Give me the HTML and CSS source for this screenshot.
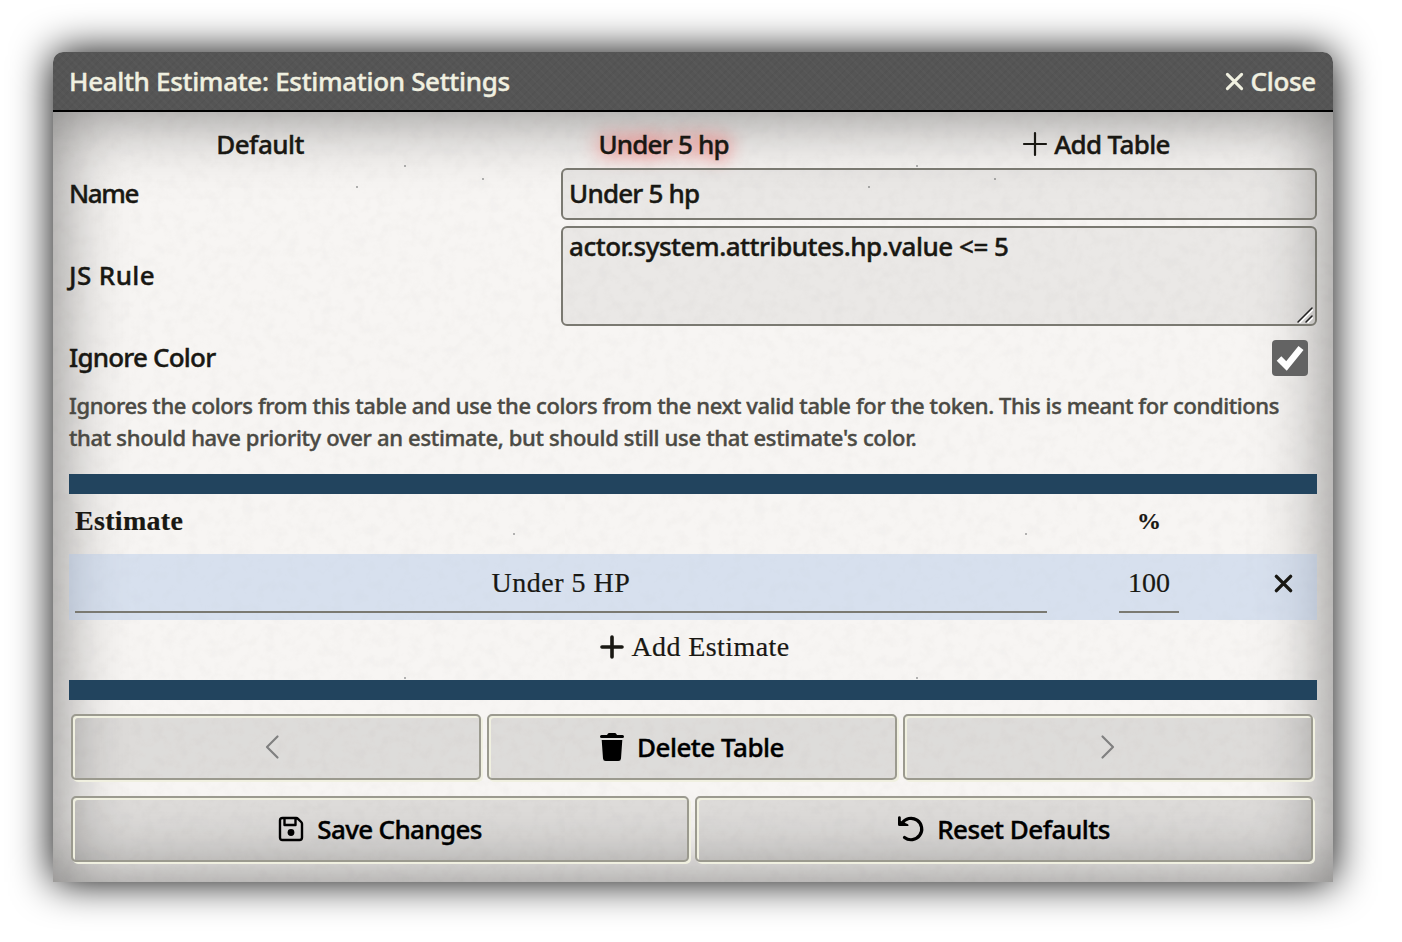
FILE: index.html
```html
<!DOCTYPE html>
<html lang="en">
<head>
<meta charset="utf-8">
<title>Health Estimate: Estimation Settings</title>
<link rel="stylesheet" href="styles.css">
</head>
<body>
<div class="window">
  <header class="window-header">
    <h1 class="title">Health Estimate: Estimation Settings</h1>
    <a class="close"><svg class="icon-x" viewBox="0 0 20 20"><path d="M2.5 2.5l15 15m0-15l-15 15"/></svg><span class="close-text">Close</span></a>
  </header>
  <form class="content">
    <nav class="tabs">
      <a class="tab tab-default">Default</a>
      <a class="tab tab-under active">Under 5 hp</a>
      <a class="tab tab-add"><svg class="icon-plus" viewBox="0 0 24 24"><path d="M12 1v22M1 12h22"/></svg><span class="add-text">Add Table</span></a>
    </nav>
    <div class="group group-name"><label class="l-name">Name</label><div class="field"><span class="t-name">Under 5 hp</span></div></div>
    <div class="group group-rule"><label class="l-rule">JS Rule</label><div class="field area"><span class="t-rule">actor.system.attributes.hp.value &lt;= 5</span><svg class="grip" viewBox="0 0 16 16"><path class="grip-light" d="M3 15.5L15.500 3M11 15.500l4.500-4.500"/><path d="M1 15L15 1M9 15l6-6"/></svg></div></div>
    <div class="group group-color"><label class="l-ignore">Ignore Color</label><span class="check"><svg viewBox="0 0 36 36"><path d="M7 18.500l7.500 7.500L29 8"/></svg></span></div>
    <p class="notes"><span class="n1">Ignores the colors from this table and use the colors from the next valid table for the token. This is meant for conditions</span><br><span class="n2">that should have priority over an estimate, but should still use that estimate's color.</span></p>
    <section class="table">
      <div class="row head"><span class="h-est">Estimate</span><span class="h-pct">%</span></div>
      <div class="row entry">
        <span class="cell-est"><span class="v-est">Under 5 HP</span></span>
        <span class="cell-pct"><span class="v-pct">100</span></span>
        <a class="remove"><svg class="icon-x bold" viewBox="0 0 20 20"><path d="M2.500 2.500l15 15m0-15l-15 15"/></svg></a>
      </div>
      <div class="row add"><svg class="icon-plus bold" viewBox="0 0 24 24"><path d="M12 2v20M2 12h20"/></svg><span class="add-est">Add Estimate</span></div>
    </section>
    <div class="buttons three">
      <button type="button" class="btn muted prev"><svg class="chev" viewBox="0 0 14 24"><path d="M12.500 1.500L2 12l10.500 10.500"/></svg></button>
      <button type="button" class="btn"><svg class="trash" viewBox="0 0 24 28"><path d="M0 3.500Q0 2 1.500 2H7l1-1.500Q8.300 0 9 0h6q.7 0 1 .5L17 2h5.500Q24 2 24 3.500T22.500 5h-21Q0 5 0 3.500zM1.700 7h20.600l-1.300 18.500Q20.800 28 18.300 28H5.700Q3.200 28 3 25.500z"/></svg><span class="b-del">Delete Table</span></button>
      <button type="button" class="btn muted"><svg class="chev" viewBox="0 0 14 24"><path d="M1.500 1.500L12 12 1.500 22.500"/></svg></button>
    </div>
    <div class="buttons two">
      <button type="button" class="btn save"><svg class="disk" viewBox="0 0 26 26"><path d="M4.500 2h13.700q1 0 1.800.8l3.200 3.200q.8.800.8 1.800v13.700q0 2.500-2.500 2.500h-17Q2 24 2 21.500v-17Q2 2 4.500 2zM6.500 2v7h11V2"/><circle cx="13" cy="16.500" r="3.400"/></svg><span class="b-save">Save Changes</span></button>
      <button type="button" class="btn"><svg class="undo" viewBox="0 0 26 26"><path class="arc" d="M4 7.300A10.700 10.700 0 1 1 6.500 21.500"/><path class="tip" d="M0 1.500Q.2.300 1.400.3T2.800 1.500V5L10 8.200Q11.300 10 9.500 10H1.500Q0 10 0 8.500z"/></svg><span class="b-reset">Reset Defaults</span></button>
    </div>
  </form>
</div>
</body>
</html>
```
FILE: styles.css
```css
* { box-sizing: border-box; }
html, body { height: 100%; }
body {
  margin: 0;
  padding: 52px 0 0 53px;
  background: #fff;
  overflow: hidden;
  color: #191813;
  font: 500 26px/32px "Noto Sans", "Open Sans", sans-serif;
  -webkit-text-stroke: .4px currentColor;
}
svg { display: block; flex: none; overflow: visible; fill: none; stroke: currentColor; stroke-linecap: round; stroke-linejoin: round; }
span, label, a { white-space: nowrap; }
.window {
  width: 1280px;
  height: 830px;
  display: flex;
  flex-direction: column;
  border-radius: 10px 10px 0 0;
  box-shadow: 0 0 40px #000;
}
.window-header {
  height: 60px;
  padding: 0 17px 0 16px;
  display: flex;
  align-items: center;
  justify-content: space-between;
  color: #f0f0e0;
  border-bottom: 2px solid #000;
  border-radius: 10px 10px 0 0;
  background:
    repeating-linear-gradient(45deg, rgba(255,255,255,.02) 0 2px, transparent 2px 6px),
    repeating-linear-gradient(-45deg, rgba(0,0,0,.03) 0 2px, transparent 2px 6px),
    #555;
}
.title { margin: 0; font-size: inherit; font-weight: inherit; line-height: inherit; white-space: nowrap; letter-spacing: -.32px; }
.close { display: flex; align-items: center; gap: 7px; }
.close-text { letter-spacing: -.3px; }
.icon-x { width: 19px; height: 19px; stroke-width: 3.200; }
.icon-plus { width: 24px; height: 24px; stroke-width: 2.200; }
.icon-x.bold, .icon-plus.bold { stroke-width: 3.600; }
.content {
  flex: 1;
  padding: 16px;
  background:
    url("data:image/svg+xml,%3Csvg xmlns='http://www.w3.org/2000/svg' width='512' height='512'%3E%3Cfilter id='n'%3E%3CfeTurbulence type='fractalNoise' baseFrequency='.09' numOctaves='3' stitchTiles='stitch'/%3E%3CfeColorMatrix values='0 0 0 0 .4 0 0 0 0 .38 0 0 0 0 .35 .12 0 0 0 -.05'/%3E%3C/filter%3E%3Crect width='512' height='512' filter='url(%23n)'/%3E%3Cg fill='%23999'%3E%3Ccircle cx='352' cy='54' r='1'/%3E%3Ccircle cx='430' cy='67' r='1'/%3E%3Ccircle cx='304' cy='75' r='1'/%3E%3Ccircle cx='461' cy='422' r='1'/%3E%3C/g%3E%3C/svg%3E"),
    #f7f5f3;
  box-shadow: inset 0 0 72px rgba(0,0,0,.5);
}
.tabs { height: 32px; display: flex; justify-content: space-around; align-items: center; }
.tab-default { letter-spacing: -.5px; }
.tab-under, .t-name { letter-spacing: -.8px; }
.tab-add { display: flex; align-items: center; gap: 7px; letter-spacing: -.65px; }
.active { text-shadow: 0 0 20px #f00; }
.group { display: flex; align-items: center; justify-content: space-between; }
.group label { position: relative; top: -1px; }
.l-name { letter-spacing: -1.4px; }
.l-rule { letter-spacing: .4px; }
.l-ignore { letter-spacing: -.8px; }
.group-name { margin-top: 8px; }
.group-rule { margin-top: 6px; }
.group-color { margin-top: 14px; padding-right: 9px; }
.field {
  width: 756px;
  height: 52px;
  padding: 7px 6px;
  border: 2px solid #7a7971;
  border-radius: 6px;
  background: rgba(0,0,0,.05);
}
.t-rule { letter-spacing: -.48px; }
.area { position: relative; height: 100px; padding-top: 2px; }
.grip { position: absolute; right: 2px; bottom: 1px; width: 16px; height: 16px; stroke: #222; stroke-width: 1.500; }
.grip-light { stroke: #fff; }
.check { width: 36px; height: 36px; border-radius: 4px; background: #636363; color: #fff; }
.check path { stroke-width: 6.500; stroke-linecap: butt; stroke-linejoin: miter; }
.notes { margin: 13px 0 21px; font-size: 22px; line-height: 32px; color: #4b4a44; }
.n1 { letter-spacing: -.4px; }
.n2 { letter-spacing: -.32px; }
.table { border: solid #22445e; border-width: 20px 0; font: 28px/32px "Liberation Serif", serif; -webkit-text-stroke: .2px currentColor; }
.row { display: flex; align-items: center; padding: 0 6px; }
.head { height: 60px; padding-bottom: 6px; font-weight: bold; }
.h-est { flex: none; width: 1044px; letter-spacing: .3px; }
.h-pct { width: 60px; text-align: center; font-size: 24px; }
.entry { height: 66px; background: rgba(173,196,232,.43); }
.cell-est, .cell-pct { height: 54px; padding-top: 8px; text-align: center; border-bottom: 2px solid #7a7971; margin-top: -2px; }
.cell-est { width: 972px; letter-spacing: .5px; }
.cell-pct { width: 60px; margin-left: 72px; }
.remove { margin-left: 95px; margin-top: -8px; }
.add { height: 60px; justify-content: center; gap: 8px; padding: 0 4px 6px 7px; letter-spacing: .4px; }
.buttons { display: grid; gap: 6px; padding: 0 4px 0 2px; }
.three { grid-template-columns: repeat(3, 1fr); margin-top: 14px; }
.two { grid-template-columns: repeat(2, 1fr); margin-top: 16px; }
.btn {
  height: 66px;
  margin: 0;
  padding: 0;
  display: flex;
  align-items: center;
  justify-content: center;
  gap: 13px;
  font: inherit;
  letter-spacing: -.5px;
  color: #000;
  border: 2px solid #9b9a8f;
  border-radius: 5px;
  background: rgba(0,0,0,.1);
  box-shadow: inset 2px 2px 0 #f0f0e0, 2px 2px 0 #f0f0e0;
}
.prev { padding-right: 8px; }
.save { letter-spacing: -.65px; }
.muted { color: #808080; }
.chev { width: 14px; height: 24px; stroke-width: 2.200; }
.trash { width: 24px; height: 28px; fill: currentColor; stroke: none; }
.disk { width: 26px; height: 26px; stroke-width: 2.400; }
.disk circle, .undo .tip { fill: currentColor; stroke: none; }
.undo { width: 26px; height: 26px; stroke-width: 3.200; }
```
